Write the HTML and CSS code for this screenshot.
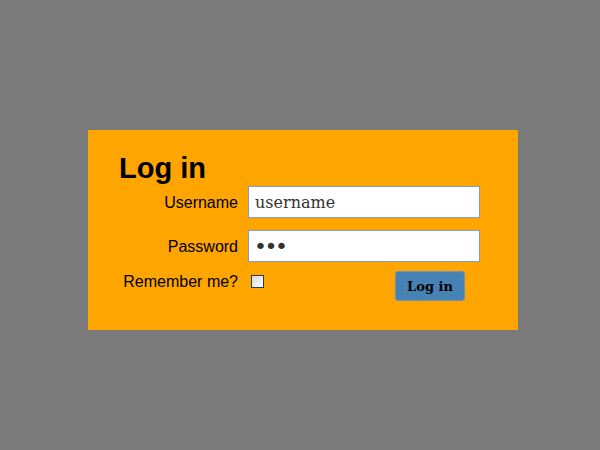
FILE: index.html
```
<!DOCTYPE html>
<html>
<head>
<meta charset="utf-8">
<link rel="stylesheet" href="styles.css">
</head>
<body>
<div class="panel">
  <h1 class="title">Log in</h1>
  <form class="form">
    <div class="row">
      <label class="label" for="u">Username</label>
      <input class="field" id="u" type="text" value="username">
    </div>
    <div class="row row-pass">
      <label class="label" for="p">Password</label>
      <input class="field field-pass" id="p" type="password" value="abc">
    </div>
    <div class="row row-last">
      <label class="label label-last" for="r">Remember me?</label>
      <div class="actions">
        <input class="check" id="r" type="checkbox">
        <button class="btn" type="button">Log in</button>
      </div>
    </div>
  </form>
</div>
</body>
</html>
```
FILE: styles.css
```
html, body {
  margin: 0;
  padding: 0;
  background: #7a7a7a;
  width: 600px;
  height: 450px;
  overflow: hidden;
}
.panel {
  box-sizing: border-box;
  margin: 130px 0 0 88px;
  width: 430px;
  height: 200px;
  background: #ffa500;
  padding: 22px 0 0 31px;
  font-family: "Liberation Sans", Arial, sans-serif;
}
.title {
  margin: 0 0 1px 0;
  font-size: 29px;
  line-height: 33px;
  font-weight: bold;
  color: #000;
}
.form {
  margin: 0;
}
.row {
  display: grid;
  grid-template-columns: 119px 232px;
  column-gap: 10px;
  align-items: center;
}
.row-pass {
  margin-top: 12px;
}
.row-last {
  margin-top: 9px;
  align-items: start;
}
.label {
  text-align: right;
  font-size: 16px;
  color: #000;
  white-space: nowrap;
  padding-top: 1px;
}
.label-last {
  margin-top: 2px;
  padding-top: 0;
}
.field {
  box-sizing: border-box;
  width: 232px;
  height: 32px;
  margin: 0;
  border: 1px solid #7d9cc6;
  padding: 0 6px;
  background: #fff;
  font-family: "DejaVu Serif", serif;
  font-size: 16px;
  color: #333;
  outline: none;
}
.field-pass {
  font-family: "DejaVu Sans", sans-serif;
  font-size: 22px;
  letter-spacing: -2.5px;
  padding-left: 5px;
}
.actions {
  display: flex;
  align-items: flex-start;
}
.check {
  appearance: none;
  -webkit-appearance: none;
  box-sizing: border-box;
  width: 13px;
  height: 13px;
  margin: 4px 0 0 3px;
  border: 1px solid #1f3d5c;
  background: linear-gradient(135deg, #d8d8d8, #ffffff);
}
.btn {
  box-sizing: border-box;
  margin: 0 15px 0 auto;
  width: 70px;
  height: 30px;
  padding: 0;
  border: 1px solid #6f93b8;
  border-radius: 3px;
  background: #4682b4;
  font-family: "DejaVu Serif", serif;
  font-weight: bold;
  font-size: 13px;
  color: #000;
}
```
